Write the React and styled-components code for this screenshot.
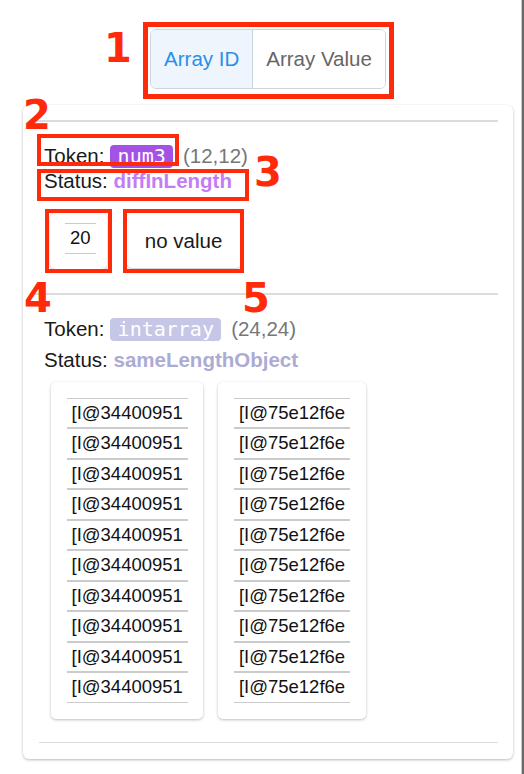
import styled, { createGlobalStyle, css } from "styled-components";

const RED = "#ff2a0a";

const GlobalStyle = createGlobalStyle`
  html, body { margin: 0; padding: 0; background: #fff; }
  body { font-family: "Liberation Sans", Arial, sans-serif; color: #1a1a1a; }
`;

// red annotation frame drawn over an element
const markBox = css`
  position: relative;
  &::after {
    content: "";
    position: absolute;
    inset: ${(p) => p.$mark};
    border: ${(p) => p.$w || 4}px solid ${RED};
    pointer-events: none;
  }
`;

const Page = styled.div`
  position: relative;
  min-height: 774px;
  box-sizing: border-box;
  padding: 0 11px 0 23px;
  box-shadow: inset -2px 0 0 #6b6b6b, inset -3px 0 0 #c8c8c8;
`;

const TopBar = styled.div`
  position: relative;
  display: flex;
  justify-content: center;
  padding: 29px 0 16px;
`;

const Toggle = styled.div`
  display: flex;
  height: 60px;
  box-sizing: border-box;
  border: 1px solid #cfd5dc;
  border-radius: 6px;
  ${(p) => p.$mark && markBox}
`;

const ToggleBtn = styled.button`
  font-family: "Liberation Sans", Arial, sans-serif;
  font-size: 20.5px;
  padding: 0 13px;
  border: none;
  background: ${(p) => (p.$active ? "#eef5fd" : "#fff")};
  color: ${(p) => (p.$active ? "#2b8fe9" : "#666")};
  &:first-child { border-radius: 5px 0 0 5px; }
  &:last-child { border-radius: 0 5px 5px 0; border-left: 1px solid #cbd3dc; }
`;

const Num = styled.span`
  position: absolute;
  left: ${(p) => p.$x}px;
  top: ${(p) => p.$y}px;
  font-family: "DejaVu Sans", sans-serif;
  font-weight: bold;
  font-size: 40px;
  line-height: 1;
  color: ${RED};
`;

const Card = styled.div`
  position: relative;
  background: #fff;
  border-radius: 6px;
  box-shadow: 0 1px 3px rgba(0, 0, 0, 0.28);
  padding: 15px 15px 16px 0;
`;

const Divider = styled.div`
  height: ${(p) => p.$h}px;
  margin: ${(p) => p.$top || 0}px 0 0 ${(p) => p.$inset}px;
  background: #dcdcdc;
`;

const Section = styled.div`
  padding-left: 21px;
`;

const Line = styled.div`
  font-size: 20.5px;
  line-height: 25px;
  height: 25px;
  margin-top: ${(p) => p.$top || 0}px;
  white-space: nowrap;
`;

const Mark = styled.span`
  ${markBox}
`;

const Badge = styled.span`
  display: inline-block;
  font-family: "DejaVu Sans Mono", monospace;
  font-size: 20px;
  line-height: 20px;
  padding: 1px 7.5px 2px;
  border-radius: 4px;
  color: #fff;
  background: ${(p) => p.$bg};
`;

const Coord = styled.span`
  margin-left: 4px;
  color: #777;
`;

const State = styled.span`
  font-weight: bold;
  color: ${(p) => p.$color};
`;

const Items = styled.div`
  display: flex;
  align-items: flex-start;
  gap: ${(p) => p.$gap}px;
  margin: ${(p) => p.$top}px 0 0 ${(p) => p.$left}px;
`;

const ItemCard = styled.div`
  background: #fff;
  border-radius: 5px;
  box-shadow: 0 1px 3px rgba(0, 0, 0, 0.26);
  padding: ${(p) => p.$pad || "16px 15.5px"};
  ${(p) => p.$mark && markBox}
`;

const Cell = styled.div`
  font-size: 18.5px;
  line-height: 28.5px;
  padding: 0 5px;
  color: #111;
  border-top: 1px solid #cbcbcb;
  border-bottom: 1px solid #cbcbcb;
  white-space: nowrap;
`;

const EmptyCard = styled(ItemCard)`
  display: flex;
  align-items: center;
  justify-content: center;
  width: 114px;
  height: 55px;
  box-sizing: border-box;
  padding: 0;
  font-size: 20.5px;
`;

const left = Array(10).fill("[I@34400951");
const right = Array(10).fill("[I@75e12f6e");

export default function App() {
  return (
    <>
      <GlobalStyle />
      <Page>
        <TopBar>
          <Num $x={81} $y={28}>1</Num>
          <Toggle $mark="-8.5px -9px -11px -8.5px" $w={5}>
            <ToggleBtn $active>Array ID</ToggleBtn>
            <ToggleBtn>Array Value</ToggleBtn>
          </Toggle>
        </TopBar>

        <Card>
          <Num $x={0} $y={-10}>2</Num>
          <Num $x={231} $y={47}>3</Num>
          <Num $x={1} $y={173}>4</Num>
          <Num $x={219} $y={173}>5</Num>

          <Divider $h={2} $inset={10} />
          <Section>
            <Line $top={21}>
              <Mark $mark="-10px -6px 1.5px -7px">
                Token: <Badge $bg="#a452e6">num3</Badge>
              </Mark>
              {" "}
              <Coord>(12,12)</Coord>
            </Line>
            <Line>
              <Mark $mark="0 -17px -8.5px -7px">
                Status: <State $color="#c47cf6">diffInLength</State>
              </Mark>
            </Line>
            <Items $top={20} $left={6} $gap={20}>
              <ItemCard $pad="10px 11px 15px 15px" $mark="-4px -5px -4px -5px">
                <Cell>20</Cell>
              </ItemCard>
              <EmptyCard $mark="-4.5px -3.5px -4.5px -4px">no value</EmptyCard>
            </Items>
          </Section>

          <Divider $h={2} $inset={10} $top={24} />
          <Section>
            <Line $top={21}>
              Token: <Badge $bg="#c6c6e7">intarray</Badge>{" "}
              <Coord>(24,24)</Coord>
            </Line>
            <Line $top={6}>
              Status: <State $color="#acacd3">sameLengthObject</State>
            </Line>
            <Items $top={10} $left={7} $gap={15}>
              <ItemCard>
                {left.map((v, i) => (
                  <Cell key={i}>{v}</Cell>
                ))}
              </ItemCard>
              <ItemCard>
                {right.map((v, i) => (
                  <Cell key={i}>{v}</Cell>
                ))}
              </ItemCard>
            </Items>
          </Section>
          <Divider $h={1} $inset={16} $top={23.5} />
        </Card>
      </Page>
    </>
  );
}
